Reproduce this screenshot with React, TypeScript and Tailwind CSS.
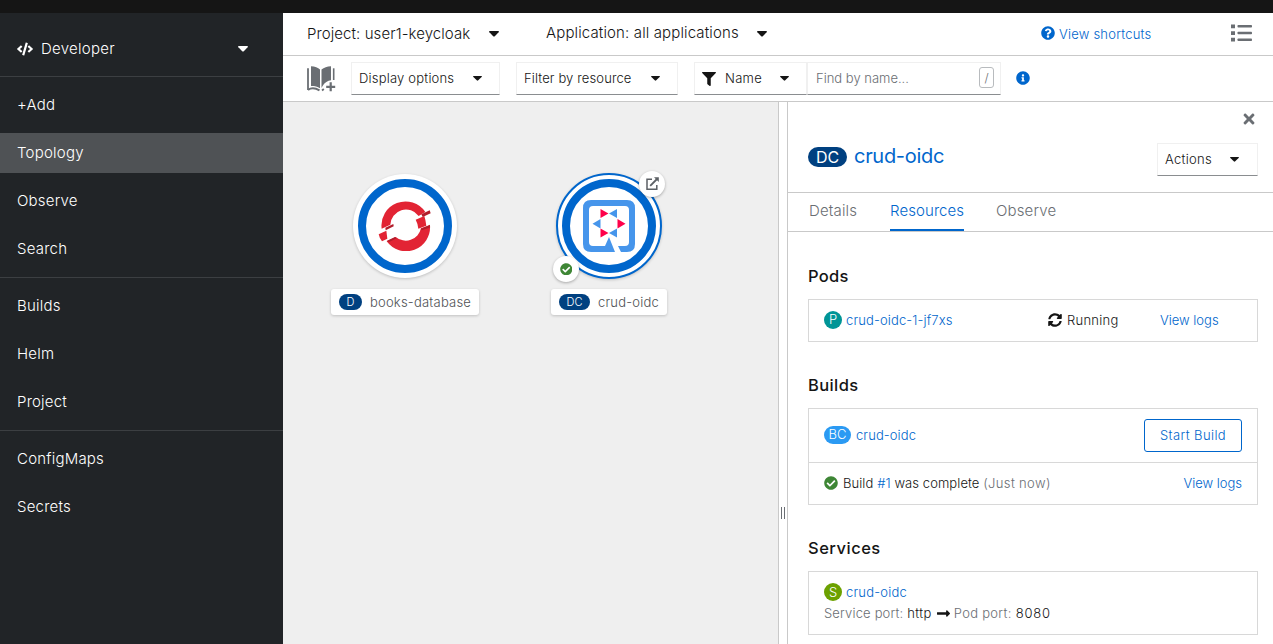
import React from "react";
import {
  FaCode,
  FaFilter,
  FaInfoCircle,
  FaQuestionCircle,
  FaTimes,
  FaSyncAlt,
  FaCheckCircle,
  FaLongArrowAltRight,
} from "react-icons/fa";

function Caret({ large = false }: { large?: boolean }) {
  return (
    <svg className={large ? "h-[6px] w-[10px] shrink-0" : "h-[5px] w-[9px] shrink-0"} viewBox="0 0 10 6" preserveAspectRatio="none" fill="currentColor">
      <path d="M0.700 0H9.300Q10.400 0.200 9.600 1.200L5.800 5.200Q5 5.900 4.200 5.200L0.400 1.200Q-0.400 0.200 0.700 0Z" />
    </svg>
  );
}

function NavItem({ label, active = false }: { label: string; active?: boolean }) {
  return (
    <a className={`flex h-10 items-center pl-[17px] text-[15px] tracking-[0.22px] text-white ${active ? "bg-[#4f5255]" : ""}`}>
      {label}
    </a>
  );
}

function Sidebar() {
  return (
    <aside className="w-[283px] shrink-0 bg-[#212427]">
      <div className="flex h-[64px] items-center border-b border-[#3c3f42] pt-2 pl-[17px] text-[15px] text-white">
        <FaCode className="mr-2 h-4 w-4" />
        <span className="w-[197px] pt-px tracking-[0.28px]">Developer</span>
        <Caret large />
      </div>
      <nav className="flex flex-col gap-2 border-b border-[#3c3f42] py-2">
        <NavItem label="+Add" />
        <NavItem label="Topology" active />
        <NavItem label="Observe" />
        <NavItem label="Search" />
      </nav>
      <nav className="flex flex-col gap-2 border-b border-[#3c3f42] py-2">
        <NavItem label="Builds" />
        <NavItem label="Helm" />
        <NavItem label="Project" />
      </nav>
      <nav className="flex flex-col gap-2 py-2">
        <NavItem label="ConfigMaps" />
        <NavItem label="Secrets" />
      </nav>
    </aside>
  );
}

function CatalogIcon() {
  return (
    <svg className="h-[26px] w-[29px]" viewBox="0 0 29 26" fill="#6a6e73">
      <path d="M4 0.300C8 0.500 11 1.500 13 3.500V22.300C10.500 20.500 8 20 4 20Z" />
      <path d="M24 0.300C20 0.500 17 1.500 14.500 3.500V22C16 20 17 15.500 24 14.300Z" />
      <path d="M1 2.300V24" fill="none" stroke="#6a6e73" strokeWidth="1.800" />
      <path d="M1 23.800C4 21.800 8 21.800 12.500 24.300" fill="none" stroke="#6a6e73" strokeWidth="2" />
      <path d="M26.700 2.300V14" stroke="#6a6e73" strokeWidth="1.600" />
      <path d="M15 24.500L16.800 23" stroke="#6a6e73" strokeWidth="1.800" />
      <path d="M23.700 16.300V25.300M19.200 20.800H28.200" stroke="#6a6e73" strokeWidth="2.200" />
    </svg>
  );
}

const selectBox = "flex items-center border border-[#f0f0f0] border-b-[#8a8d90] text-[13px] text-[#151515]";

function Toolbar() {
  return (
    <>
      <div className="flex h-[43px] items-center border-b border-[#c9c9c9] pl-6 text-[15px] text-[#151515]">
        <span className="w-[182px] tracking-[0.08px]">Project: user1-keycloak</span>
        <Caret large />
        <span className="-mt-px ml-[47px] w-[211px] tracking-[0.13px]">Application: all applications</span>
        <Caret large />
        <FaQuestionCircle className="-mt-[3px] ml-[274px] h-[14px] w-[14px] text-[#06c]" />
        <span className="ml-1 w-[172px] pt-px text-[13px] tracking-[0.22px] text-[#06c]">View shortcuts</span>
        <svg className="-mt-[2px] h-[18px] w-[21px]" viewBox="0 0 21 18" fill="#6a6e73">
          <path d="M0 0.500H4V4.200H0ZM0 7.200H4V10.900H0ZM0 13.800H4V17.500H0Z" />
          <rect x="6.500" y="1" width="14.500" height="2.500" rx="0.800" />
          <rect x="6.500" y="7.800" width="14.500" height="2.500" rx="0.800" />
          <rect x="6.500" y="14.500" width="14.500" height="2.500" rx="0.800" />
        </svg>
      </div>
      <div className="flex h-[46px] items-center border-b border-[#c9c9c9] pl-6">
        <CatalogIcon />
        <div className={`${selectBox} ml-[15px] h-[33px] w-[149px] pl-[7px]`}>
          <span className="w-[114px] tracking-[0.2px]">Display options</span>
          <Caret />
        </div>
        <div className={`${selectBox} ml-4 h-[33px] w-[162px] pl-[7px]`}>
          <span className="w-[127px] tracking-[0.12px]">Filter by resource</span>
          <Caret />
        </div>
        <div className={`${selectBox} ml-4 h-[33px] w-[113px] pl-[7px]`}>
          <FaFilter className="mr-[9px] h-[14px] w-[14px]" />
          <span className="w-[55px] tracking-[0.3px]">Name</span>
          <Caret />
        </div>
        <div className={`${selectBox} h-[33px] w-[194px] justify-between border-l-[#f0f0f0] pr-[6px] pl-2`}>
          <span className="text-[#6a6e73]">Find by name...</span>
          <kbd className="-mt-[2px] flex h-[21px] w-[15px] items-center justify-center rounded-[3px] border border-[#b8bbbe] font-['Inter',sans-serif] text-[12px] text-[#6a6e73]">/</kbd>
        </div>
        <FaInfoCircle className="-mt-px ml-[15px] h-[14px] w-[14px] text-[#06c]" />
      </div>
    </>
  );
}

function OpenShiftLogo() {
  return (
    <svg className="h-[50px] w-[54px]" viewBox="175 123 162 150" fill="#e22434">
      <path d="M186 206A72 72 0 0 1 317 156L297 168A47 47 0 0 0 212 194Z" />
      <path d="M331 196A72 72 0 0 1 201 244L228 231A47 47 0 0 0 304 205Z" />
      <path d="M177 223L200 212L203 236L187 244Q179 234 177 223Z" />
      <path d="M288 179L314 168Q318 180 320 197L296 206Q295 192 288 179Z" />
      <g fill="#b21d2b">
        <path d="M197 203L221 192L222 199L198 211Z" />
        <path d="M201 243L226 231L231 235L208 246Z" />
        <path d="M305 163L330 151L333 160L309 171Z" />
        <path d="M303 206L331 194L330 203L306 211Z" />
      </g>
    </svg>
  );
}

function QuarkusLogo() {
  return (
    <svg className="h-[52px] w-[52px]" viewBox="0 0 52 52">
      <path
        d="M8 0H44Q52 0 52 8V44Q52 52 44 52H38L35 46H42Q46 46 46 42V10Q46 6 42 6H10Q6 6 6 10V42Q6 46 10 46H22L26 37L32 52H8Q0 52 0 44V8Q0 0 8 0Z"
        fill="#4695eb"
      />
      <path d="M26 13.500L34 9V18ZM17.500 19V28.500L9.500 23.700ZM26 33L34 28.500V37.500Z" fill="#4695eb" />
      <path d="M17.500 9L25.500 13.500L17.500 18ZM34.500 19L42.500 23.700L34.500 28.500ZM17.500 28.500L25.500 33L17.500 37.500Z" fill="#ff004a" />
    </svg>
  );
}

function NodeLabel({ kind, name, className }: { kind: string; name: string; className: string }) {
  return (
    <div className={`absolute flex h-[26px] items-center rounded-[3px] bg-white pl-2 text-[13px] text-[#4f5255] shadow-[0_1px_3px_rgba(0,0,0,0.2)] ${className}`}>
      <span className="mr-2 flex h-4 items-center rounded-full bg-[#004080] px-[7.500px] text-[11px] text-white">{kind}</span>
      <span className="pt-px tracking-[0.22px]">{name}</span>
    </div>
  );
}

function Canvas() {
  return (
    <div className="relative w-[495px] bg-[#efefef]">
      <div className="absolute top-[72px] left-[70px] flex h-[104px] w-[104px] items-center justify-center rounded-full bg-white shadow-[0_1px_3px_rgba(0,0,0,0.2)]">
        <div className="flex h-[94px] w-[94px] items-center justify-center rounded-full border-8 border-[#06c]">
          <OpenShiftLogo />
        </div>
      </div>
      <NodeLabel kind="D" name="books-database" className="top-[187px] left-[48px] w-[148px]" />
      <div className="absolute top-[71px] left-[273px] flex h-[106px] w-[106px] items-center justify-center rounded-full border-2 border-[#06c] bg-white shadow-[0_1px_3px_rgba(0,0,0,0.2)]">
        <div className="flex h-[94px] w-[94px] shrink-0 items-center justify-center rounded-full border-8 border-[#06c]">
          <QuarkusLogo />
        </div>
      </div>
      <div className="absolute top-[69px] left-[356px] flex h-[26px] w-[26px] items-center justify-center rounded-full bg-white shadow-[0_1px_3px_rgba(0,0,0,0.3)]">
        <svg className="-mt-px h-[13px] w-[13px]" viewBox="0 0 13 13" fill="none" stroke="#5c6065" strokeWidth="1.500">
          <path d="M6 2.200H1V12.200H10.800V8" />
          <path d="M4.200 8.800L11 2" strokeWidth="1.800" />
          <path d="M8 0.300H12.800V5Z" fill="#5c6065" stroke="none" />
        </svg>
      </div>
      <div className="absolute top-[154px] left-[270px] flex h-[26px] w-[26px] items-center justify-center rounded-full bg-white shadow-[0_1px_3px_rgba(0,0,0,0.3)]">
        <FaCheckCircle className="h-[12.500px] w-[12.500px] text-[#3e8635]" />
      </div>
      <NodeLabel kind="DC" name="crud-oidc" className="top-[187px] left-[268px] w-[116px]" />
    </div>
  );
}

function Badge({ text, className }: { text: string; className: string }) {
  return <span className={`flex shrink-0 items-center justify-center rounded-full text-white ${className}`}>{text}</span>;
}

function DetailsPanel() {
  return (
    <section className="relative flex-1 border-l border-[#c9c9c9] bg-white text-[13px] text-[#151515]">
      <FaTimes className="absolute top-[9px] right-[17px] h-[16px] w-[14px] text-[#6a6e73]" />
      <header className="flex h-[91px] items-start border-b border-[#c9c9c9] pr-[15px] pl-5">
        <Badge text="DC" className="mt-[45px] h-5 w-[39px] bg-[#004080] text-[16px] font-normal" />
        <h1 className="mt-[40px] ml-[7px] flex-1 text-[20px] leading-[28px] font-normal tracking-[-0.3px] text-[#06c]">crud-oidc</h1>
        <div className={`${selectBox} mt-[41px] h-[33px] w-[101px] pl-[7px]`}>
          <span className="w-[65px] tracking-[0.3px]">Actions</span>
          <Caret />
        </div>
      </header>
      <div className="flex h-[39px] border-b border-[#c9c9c9] pl-[21px] text-[15px] leading-[36px] tracking-[0.15px] text-[#6a6e73]">
        <span className="w-[81px]">Details</span>
        <span className="mr-8 w-[74px] border-b-2 border-[#06c] tracking-[0.08px] text-[#06c]">Resources</span>
        <span>Observe</span>
      </div>
      <div className="pr-[15px] pl-5">
        <h2 className="mt-[32px] text-[16.500px] leading-6 font-[450] tracking-[0.3px]">Pods</h2>
        <div className="mt-[11px] flex h-[43px] items-center border border-[#d8d8d8] pl-[15px]">
          <Badge text="P" className="-mt-px h-[18px] w-[18px] bg-[#009596]" />
          <span className="ml-1 w-[202px] tracking-[0.13px] text-[#06c]">crud-oidc-1-jf7xs</span>
          <FaSyncAlt className="-mt-px h-[14px] w-[14px]" />
          <span className="ml-[5px] w-[93px] tracking-[0.25px]">Running</span>
          <span className="text-[#06c]">View logs</span>
        </div>
        <h2 className="mt-[31px] text-[16.500px] leading-6 font-[450] tracking-[0.4px]">Builds</h2>
        <div className="mt-[11px] border border-[#d8d8d8]">
          <div className="flex h-[54px] items-center border-b border-[#d8d8d8] px-[15px]">
            <Badge text="BC" className="-mt-px h-[18px] w-[27px] bg-[#2b9af3]" />
            <span className="ml-[5px] flex-1 tracking-[0.1px] text-[#06c]">crud-oidc</span>
            <button className="h-[33px] w-[98px] rounded-[3px] border border-[#06c] tracking-[0.4px] text-[#06c]">Start Build</button>
          </div>
          <div className="flex h-[41px] items-center px-[15px]">
            <FaCheckCircle className="-mt-px mr-[5px] h-[14px] w-[14px] text-[#3e8635]" />
            <span className="flex-1 tracking-[0.08px]">
              Build <span className="text-[#06c]">#1</span> was complete <span className="tracking-[0.35px] text-[#6a6e73]">(Just now)</span>
            </span>
            <span className="text-[#06c]">View logs</span>
          </div>
        </div>
        <h2 className="mt-[31px] text-[16.500px] leading-6 font-[450] tracking-[0.5px]">Services</h2>
        <div className="mt-[11px] h-[64px] border border-[#d8d8d8] pt-[10px] pl-[15px] leading-[21px]">
          <div className="flex items-center">
            <Badge text="S" className="-mt-px h-[18px] w-[18px] bg-[#6ca100]" />
            <span className="ml-1 tracking-[0.2px] text-[#06c]">crud-oidc</span>
          </div>
          <div className="flex items-center tracking-[0.16px] text-[#6a6e73]">
            <span>Service port: <span className="tracking-[0.4px] text-[#151515]">http</span></span>
            <FaLongArrowAltRight className="mr-1 ml-[5px] h-[15px] w-[13px] text-[#151515]" />
            <span className="tracking-[0.3px]">Pod port: <span className="tracking-[0.8px] text-[#151515]">8080</span></span>
          </div>
        </div>
      </div>
    </section>
  );
}

export default function App() {
  return (
    <div className="flex h-[644px] w-[1273px] flex-col overflow-hidden bg-white font-['Inter',sans-serif] font-[350] whitespace-nowrap">
      <div className="h-[13px] shrink-0 bg-[#151515]" />
      <div className="flex min-h-0 flex-1">
        <Sidebar />
        <main className="flex min-w-0 flex-1 flex-col">
          <Toolbar />
          <div className="flex min-h-0 flex-1">
            <Canvas />
            <div className="flex w-[9px] shrink-0 justify-center gap-[2px] border-l border-[#c9c9c9] bg-white pt-[405px]">
              <span className="h-3 w-px bg-[#6a6e73]" />
              <span className="h-3 w-px bg-[#6a6e73]" />
            </div>
            <DetailsPanel />
          </div>
        </main>
      </div>
    </div>
  );
}
